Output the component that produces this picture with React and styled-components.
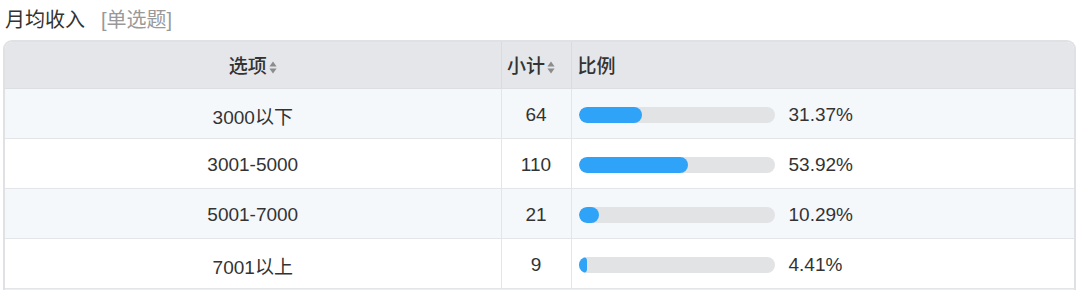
import React from 'react';
import styled, { createGlobalStyle } from 'styled-components';

const Global = createGlobalStyle`
  body {
    margin: 0;
    background: #ffffff;
    font-family: "Liberation Sans", "Noto Sans CJK SC", sans-serif;
    color: #333333;
  }
`;

const Page = styled.div`
  padding: 0 4px 0 3px;
`;

const Title = styled.div`
  height: 40px;
  display: flex;
  align-items: center;
  padding-left: 2px;
  padding-bottom: 4px;
  box-sizing: border-box;
  font-size: 20px;
  color: #333333;
`;

const Kind = styled.span`
  color: #999999;
  margin-left: 16px;
`;

const Frame = styled.div`
  border: 2px solid #dfe1e4;
  border-bottom: none;
  border-radius: 9px 9px 0 0;
  overflow: hidden;
`;

const Table = styled.table`
  width: 100%;
  border-collapse: collapse;
  table-layout: fixed;
  font-size: 19px;
`;

const Th = styled.th`
  height: 46px;
  box-sizing: border-box;
  background: #e4e6ea;
  font-weight: 500;
  color: #333333;
  text-align: ${p => p.$align || 'center'};
  padding: 0 ${p => p.$pr || '0'} 0 ${p => (p.$align === 'left' ? '6px' : '0')};
  border-right: ${p => (p.$last ? 'none' : '1px solid #d9dbdf')};
  border-bottom: 1px solid #dcdee2;
  white-space: nowrap;
`;

const Row = styled.tr`
  background: ${p => (p.$striped ? '#f5f8fb' : '#ffffff')};
`;

const Td = styled.td`
  height: 50px;
  box-sizing: border-box;
  text-align: ${p => p.$align || 'center'};
  padding: 4px ${p => (p.$align === 'left' ? '7px' : '0')} 0;
  border-right: ${p => (p.$last ? 'none' : '1px solid #e3e5e8')};
  border-bottom: 1px solid #e3e5e8;
  color: #333333;
`;

const Foot = styled.td`
  height: 10px;
  background: #eceef1;
`;

const Ratio = styled.div`
  display: flex;
  align-items: center;
`;

const Track = styled.div`
  width: 196px;
  height: 16px;
  border-radius: 8px;
  background: #e2e3e5;
  overflow: hidden;
  flex-shrink: 0;
`;

const Fill = styled.div`
  height: 100%;
  border-radius: 8px;
  background: #2ea3f7;
`;

const Pct = styled.span`
  margin-left: 14px;
`;

const SortWrap = styled.span`
  display: inline-block;
  margin-left: 2px;
  vertical-align: -1px;
`;

function SortIcon() {
  return (
    <SortWrap>
      <svg width="8" height="13" viewBox="0 0 8 13">
        <path d="M4 0.5 L7.6 5.5 H0.4 Z" fill="#8c8c8c" />
        <path d="M4 12.5 L7.6 7.5 H0.4 Z" fill="#8c8c8c" />
      </svg>
    </SortWrap>
  );
}

const rows = [
  { label: '3000以下', count: 64, pct: 31.37 },
  { label: '3001-5000', count: 110, pct: 53.92 },
  { label: '5001-7000', count: 21, pct: 10.29 },
  { label: '7001以上', count: 9, pct: 4.41 },
];

export default function App() {
  return (
    <Page>
      <Global />
      <Title>
        月均收入<Kind>[单选题]</Kind>
      </Title>
      <Frame>
        <Table>
          <colgroup>
            <col style={{ width: '496px' }} />
            <col style={{ width: '70px' }} />
            <col />
          </colgroup>
          <thead>
            <tr>
              <Th>选项<SortIcon /></Th>
              <Th $pr="10px">小计<SortIcon /></Th>
              <Th $align="left" $last>比例</Th>
            </tr>
          </thead>
          <tbody>
            {rows.map((r, i) => (
              <Row key={r.label} $striped={i % 2 === 0}>
                <Td>{r.label}</Td>
                <Td>{r.count}</Td>
                <Td $align="left" $last>
                  <Ratio>
                    <Track>
                      <Fill style={{ width: `${Math.max(r.pct * 1.04, 4.5)}%` }} />
                    </Track>
                    <Pct>{r.pct.toFixed(2)}%</Pct>
                  </Ratio>
                </Td>
              </Row>
            ))}
            <tr>
              <Foot colSpan={3} />
            </tr>
          </tbody>
        </Table>
      </Frame>
    </Page>
  );
}
